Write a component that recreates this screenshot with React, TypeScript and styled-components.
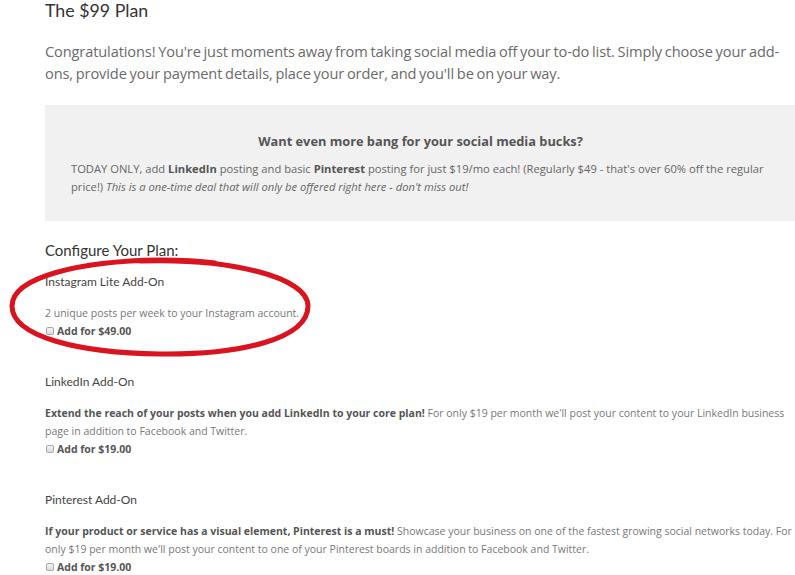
import React from "react";
import styled, { createGlobalStyle } from "styled-components";

const Global = createGlobalStyle`
  html, body { margin: 0; padding: 0; background: #fff; }
  body { font-family: "Open Sans", "Liberation Sans", sans-serif; color: #666; }
`;

const Page = styled.div`
  position: relative;
  padding: 0 0 0 45px;
  width: 750px;
`;

const Title = styled.h1`
  font-family: Lato, "Liberation Sans", sans-serif;
  font-weight: 400;
  font-size: 17.8px;
  line-height: 20px;
  color: #333;
  margin: 0;
`;

const Lead = styled.p`
  font-size: 14.6px;
  word-spacing: -0.85px;
  letter-spacing: -0.12px;
  line-height: 22px;
  color: #6a6a6a;
  margin: 20px 0 0;
`;

const Promo = styled.div`
  background: #f1f1f1;
  margin-top: 21px;
  padding: 26px 25px 28px 26px;
  height: 62px;
`;

const PromoTitle = styled.h3`
  font-size: 12.8px;
  font-weight: 700;
  color: #555;
  text-align: center;
  margin: 0 0 9px;
  line-height: 20px;
`;

const PromoText = styled.p`
  font-size: 11.2px;
  line-height: 18px;
  margin: 0;
  color: #666;
  b { color: #555; }
`;

const Section = styled.h2`
  font-family: Lato, "Liberation Sans", sans-serif;
  font-weight: 400;
  font-size: 15px;
  color: #333;
  margin: 19px 0 0;
  line-height: 20px;
`;

const AddOn = styled.div<{ $first?: boolean }>`
  margin-top: ${(p) => (p.$first ? "13px" : "33px")};
`;

const AddOnTitle = styled.h4`
  font-family: Lato, "Liberation Sans", sans-serif;
  font-weight: 400;
  font-size: 12px;
  color: #444;
  margin: 0;
  line-height: 18px;
`;

const Desc = styled.p`
  font-size: 10.5px;
  line-height: 18px;
  margin: 13px 0 0;
  color: #777;
  b { color: #555; }
`;

const CheckRow = styled.label`
  display: flex;
  align-items: center;
  gap: 3px;
  font-size: 10.5px;
  font-weight: 700;
  color: #555;
  line-height: 18px;
`;

const Box = styled.input`
  appearance: none;
  width: 8px;
  height: 8px;
  margin: 0 0 0 1px;
  border: 1px solid #a8a8a8;
  border-radius: 2px;
  background: linear-gradient(#f4f4f4, #dcdcdc);
`;

const Ring = styled.svg`
  position: absolute;
  left: 0;
  top: 255px;
  pointer-events: none;
`;

const addons = [
  {
    title: "Instagram Lite Add-On",
    desc: <>2 unique posts per week to your Instagram account.</>,
    price: "$49.00",
  },
  {
    title: "LinkedIn Add-On",
    desc: (
      <>
        <b>Extend the reach of your posts when you add LinkedIn to your core plan!</b> For only $19 per
        month we'll post your content to your LinkedIn business page in addition to Facebook and Twitter.
      </>
    ),
    price: "$19.00",
  },
  {
    title: "Pinterest Add-On",
    desc: (
      <>
        <b>If your product or service has a visual element, Pinterest is a must!</b> Showcase your
        business on one of the fastest growing social networks today. For only $19 per month we'll post
        your content to one of your Pinterest boards in addition to Facebook and Twitter.
      </>
    ),
    price: "$19.00",
  },
];

export default function App() {
  return (
    <Page>
      <Global />
      <Title>The $99 Plan</Title>
      <Lead>
        Congratulations! You're just moments away from taking social media off your to-do list. Simply
        choose your add-ons, provide your payment details, place your order, and you'll be on your way.
      </Lead>
      <Promo>
        <PromoTitle>Want even more bang for your social media bucks?</PromoTitle>
        <PromoText>
          TODAY ONLY, add <b>LinkedIn</b> posting and basic <b>Pinterest</b> posting for just $19/mo each!
          (Regularly $49 - that's over 60% off the regular price!){" "}
          <i>This is a one-time deal that will only be offered right here - don't miss out!</i>
        </PromoText>
      </Promo>
      <Section>Configure Your Plan:</Section>
      {addons.map((a, i) => (
        <AddOn key={a.title} $first={i === 0}>
          <AddOnTitle>{a.title}</AddOnTitle>
          <Desc>{a.desc}</Desc>
          <CheckRow>
            <Box type="checkbox" />
            Add for {a.price}
          </CheckRow>
        </AddOn>
      ))}
      <Ring width="330" height="110" viewBox="0 0 330 110">
        <path
          d="M140 6 C 230 3, 308 22, 308 51 C 308 84, 240 100, 160 99 C 80 98, 12 82, 12 51 C 12 22, 80 6, 160 5 C 185 5, 200 6, 215 8"
          fill="none"
          stroke="#d9141e"
          strokeWidth="5"
          strokeLinecap="round"
        />
      </Ring>
    </Page>
  );
}
